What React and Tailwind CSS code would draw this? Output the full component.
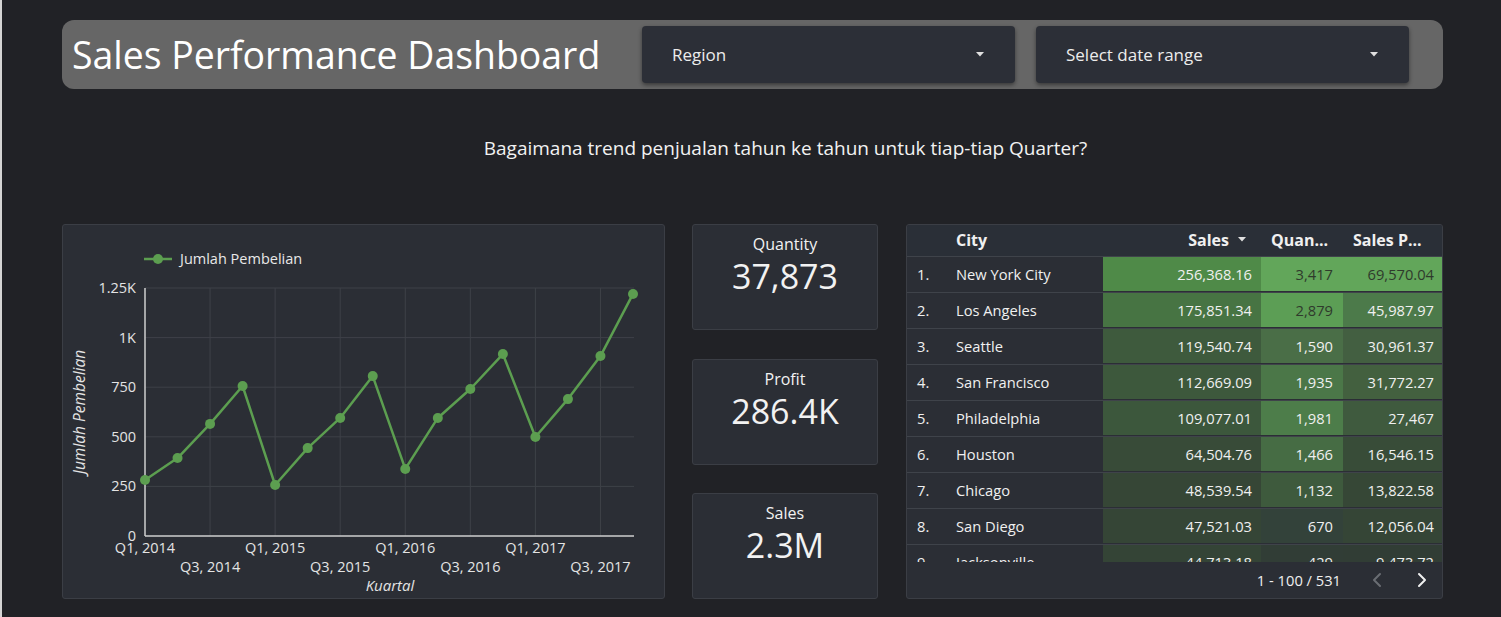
import React from "react";
import { ChevronLeft, ChevronRight } from "lucide-react";

const font = { fontFamily: "'Open Sans', 'Noto Sans', sans-serif" };

// Jumlah Pembelian per kuartal, Q1 2014 .. Q4 2017
const series = [282, 393, 565, 756, 257, 443, 595, 806, 338, 595, 741, 917, 499, 690, 907, 1220];

// card inner origin on the page is (63, 225)
const X0 = 145 - 63;
const STEP = (633 - 145) / 15;
const Y0 = 536 - 225;
const yOf = (v) => Y0 - (v / 1250) * 248;

const rows = [
  { city: "New York City", sales: "256,368.16", qty: "3,417", sp: "69,570.04", sBg: "bg-[#4f8a48]", qBg: "bg-[#62a65a] text-[#2f3a2c]", pBg: "bg-[#62a65a] text-[#2f3a2c]" },
  { city: "Los Angeles", sales: "175,851.34", qty: "2,879", sp: "45,987.97", sBg: "bg-[#477443]", qBg: "bg-[#5c9e55] text-[#2f3a2c]", pBg: "bg-[#4c7a4a]" },
  { city: "Seattle", sales: "119,540.74", qty: "1,590", sp: "30,961.37", sBg: "bg-[#3e5a3d]", qBg: "bg-[#4a6e47]", pBg: "bg-[#435f41]" },
  { city: "San Francisco", sales: "112,669.09", qty: "1,935", sp: "31,772.27", sBg: "bg-[#3d583c]", qBg: "bg-[#4b7748]", pBg: "bg-[#43603f]" },
  { city: "Philadelphia", sales: "109,077.01", qty: "1,981", sp: "27,467", sBg: "bg-[#3c573c]", qBg: "bg-[#4d7d4a]", pBg: "bg-[#3f5a3e]" },
  { city: "Houston", sales: "64,504.76", qty: "1,466", sp: "16,546.15", sBg: "bg-[#384b38]", qBg: "bg-[#466c44]", pBg: "bg-[#384c38]" },
  { city: "Chicago", sales: "48,539.54", qty: "1,132", sp: "13,822.58", sBg: "bg-[#364636]", qBg: "bg-[#3e5a3d]", pBg: "bg-[#364736]" },
  { city: "San Diego", sales: "47,521.03", qty: "670", sp: "12,056.04", sBg: "bg-[#354536]", qBg: "bg-[#33423a]", pBg: "bg-[#354536]" },
  { city: "Jacksonville", sales: "44,713.18", qty: "429", sp: "9,473.72", sBg: "bg-[#344436]", qBg: "bg-[#313d36]", pBg: "bg-[#313d35]" },
];

const Caret = ({ className }) => (
  <svg width="8" height="5" viewBox="0 0 8 5" className={className}>
    <polygon points="0,0 8,0 4,4.5" fill="currentColor" />
  </svg>
);

const Dropdown = ({ label }) => (
  <div className="w-[373px] h-[57px] rounded-[4px] bg-[#2c2f37] shadow-[0_2px_4px_rgba(0,0,0,0.45)] flex items-center justify-between pl-[30px] pr-[31px] text-[17px] text-[#ececec]">
    <span>{label}</span>
    <Caret className="text-[#e0e0e0]" />
  </div>
);

const LineChart = () => {
  const pts = series.map((v, i) => [X0 + i * STEP, yOf(v)]);
  const yTicks = [0, 250, 500, 750, 1000, 1250];
  const yLabel = { 0: "0", 250: "250", 500: "500", 750: "750", 1000: "1K", 1250: "1.25K" };
  const q1 = ["Q1, 2014", "Q1, 2015", "Q1, 2016", "Q1, 2017"];
  const q3 = ["Q3, 2014", "Q3, 2015", "Q3, 2016", "Q3, 2017"];
  const xEnd = 634 - 63;
  return (
    <svg width="601" height="373" style={font}>
      {/* legend */}
      <line x1={144 - 63} y1={259 - 225} x2={172 - 63} y2={259 - 225} stroke="#5c9e50" strokeWidth="2.5" />
      <circle cx={158 - 63} cy={259 - 225} r="5" fill="#5c9e50" />
      <text x={180 - 63} y={264 - 225} fontSize="14.5" fill="#e8e8e8">Jumlah Pembelian</text>

      {/* grid */}
      {yTicks.slice(1).map((t) => (
        <line key={t} x1={X0} x2={xEnd} y1={yOf(t)} y2={yOf(t)} stroke="#3e4148" strokeWidth="1" />
      ))}
      {[1, 2, 3, 4, 5, 6, 7].map((k) => (
        <line key={k} x1={X0 + k * 2 * STEP} x2={X0 + k * 2 * STEP} y1={yOf(1250)} y2={Y0} stroke="#3e4148" strokeWidth="1" />
      ))}

      {/* axes */}
      <line x1={X0} x2={X0} y1={yOf(1250)} y2={Y0} stroke="#cfcfcf" strokeWidth="1.5" />
      <line x1={X0} x2={xEnd} y1={Y0} y2={Y0} stroke="#cfcfcf" strokeWidth="1.5" />

      {yTicks.map((t) => (
        <text key={t} x={136 - 63} y={yOf(t) + 5} fontSize="14.5" fill="#e4e4e4" textAnchor="end">{yLabel[t]}</text>
      ))}
      {q1.map((l, i) => (
        <text key={l} x={X0 + i * 4 * STEP} y={553 - 225} fontSize="14.5" fill="#e4e4e4" textAnchor="middle">{l}</text>
      ))}
      {q3.map((l, i) => (
        <text key={l} x={X0 + (i * 4 + 2) * STEP} y={572 - 225} fontSize="14.5" fill="#e4e4e4" textAnchor="middle">{l}</text>
      ))}

      <text x={390 - 63} y={591 - 225} fontSize="15" fontStyle="italic" fill="#e4e4e4" textAnchor="middle">Kuartal</text>
      <text transform={`translate(${85 - 63}, ${412 - 225}) rotate(-90)`} fontSize="15.5" fontStyle="italic" fill="#e4e4e4" textAnchor="middle">Jumlah Pembelian</text>

      {/* series */}
      <polyline points={pts.map((p) => p.join(",")).join(" ")} fill="none" stroke="#5c9e50" strokeWidth="2.5" strokeLinejoin="round" />
      {pts.map((p, i) => (
        <circle key={i} cx={p[0]} cy={p[1]} r="5" fill="#5c9e50" />
      ))}
    </svg>
  );
};

const Kpi = ({ label, value }) => (
  <div className="h-[106px] rounded-[3px] border border-[#3b3e45] bg-[#2b2e35] flex flex-col items-center pt-[8px] text-[#f2f2f2]">
    <div className="text-[16px] leading-[22px]">{label}</div>
    <div className="text-[34px] leading-[42px]">{value}</div>
  </div>
);

const CityTable = () => (
  <div className="w-[537px] h-[375px] rounded-[3px] border border-[#3b3e45] bg-[#2b2e35] flex flex-col overflow-hidden text-[#f0f0f0]">
    <div className="h-[31px] flex items-center bg-[#2a2f37] text-[16px] font-bold shrink-0 pb-[2px]">
      <div className="w-[39px]" />
      <div className="w-[157px] pl-[10px]">City</div>
      <div className="w-[158px] flex items-center justify-end gap-[9px] pr-[15px]">
        Sales <Caret className="text-[#e0e0e0]" />
      </div>
      <div className="w-[82px] pl-[10px] whitespace-nowrap">Quan...</div>
      <div className="w-[99px] pl-[10px] whitespace-nowrap">Sales P...</div>
    </div>
    <div className="h-[306px] overflow-hidden shrink-0">
      {rows.map((r, i) => (
        <div key={r.city} className="h-[36px] flex border-t border-[#3f434a] text-[14.7px] pb-[1px]">
          <div className="w-[39px] pl-[10px] flex items-center">{i + 1}.</div>
          <div className="w-[157px] pl-[10px] flex items-center">{r.city}</div>
          <div className={`w-[158px] pr-[9px] flex items-center justify-end ${r.sBg}`}>{r.sales}</div>
          <div className={`w-[82px] pr-[10px] flex items-center justify-end ${r.qBg}`}>{r.qty}</div>
          <div className={`w-[99px] pr-[8px] flex items-center justify-end ${r.pBg}`}>{r.sp}</div>
        </div>
      ))}
    </div>
    <div className="flex-1 flex items-center justify-end pr-[8px] text-[14.7px]">
      <span className="mr-[24px]">1 - 100 / 531</span>
      <ChevronLeft size={24} strokeWidth={2} className="text-[#6a6d73] mr-[21px]" />
      <ChevronRight size={24} strokeWidth={2} className="text-[#f0f0f0]" />
    </div>
  </div>
);

export default function App() {
  return (
    <div className="min-h-[617px] bg-[#212226] border-l-2 border-[#d4d4d4] pt-[20px]" style={font}>
      <div className="ml-[60px] w-[1381px] h-[69px] rounded-[12px] bg-[#666666] flex items-center">
        <div className="w-[580px] pl-[10px] pt-[2px] text-[37.4px] text-white whitespace-nowrap">Sales Performance Dashboard</div>
        <div className="flex gap-[21px]">
          <Dropdown label="Region" />
          <Dropdown label="Select date range" />
        </div>
      </div>

      <div className="ml-[60px] w-[1381px] mt-[46px] pl-[66px] text-center text-[19px] leading-[26px] text-[#f2f2f2]">
        Bagaimana trend penjualan tahun ke tahun untuk tiap-tiap Quarter?
      </div>

      <div className="ml-[60px] mt-[63px] flex gap-[27px]">
        <div className="w-[603px] h-[375px] rounded-[3px] border border-[#3b3e45] bg-[#2b2e35]">
          <LineChart />
        </div>
        <div className="w-[186px] h-[375px] flex flex-col justify-between">
          <Kpi label="Quantity" value="37,873" />
          <Kpi label="Profit" value="286.4K" />
          <Kpi label="Sales" value="2.3M" />
        </div>
        <div className="ml-[1px]">
          <CityTable />
        </div>
      </div>
    </div>
  );
}
